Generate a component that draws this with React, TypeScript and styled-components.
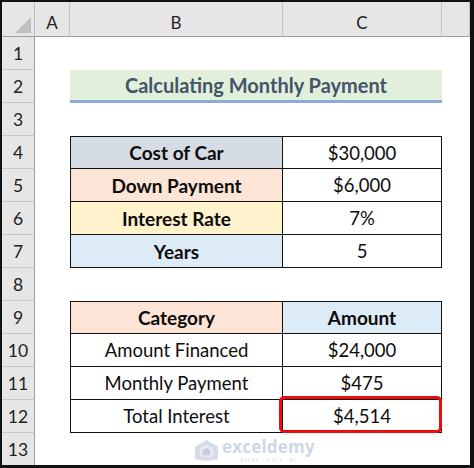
import React from "react";
import styled, { createGlobalStyle, css } from "styled-components";

const Global = createGlobalStyle`
  html, body { margin: 0; padding: 0; background: #000; }
  body { font-family: Lato, "Noto Sans", sans-serif; }
`;

const Frame = styled.div`
  width: 474px;
  height: 468px;
  box-sizing: border-box;
  padding: 2px 4px 3px 2px;
  background: #111;
`;

const Sheet = styled.div`
  position: relative;
  height: 100%;
  background: #fff;
  display: grid;
  grid-template-columns: 33px 35px 213px 159px 1fr;
  grid-template-rows: 35px repeat(13, 33px);
  overflow: hidden;
  color: #0d0d0d;
`;

const Corner = styled.div`
  position: relative;
  background: #e6e6e6;
  border-right: 1px solid #bdbdbd;
  border-bottom: 1px solid #9e9e9e;
  box-sizing: border-box;
  &::after {
    content: "";
    position: absolute;
    right: 3px;
    bottom: 3px;
    width: 0;
    height: 0;
    border-left: 16px solid transparent;
    border-bottom: 16px solid #bfbfbf;
  }
`;

const ColHead = styled.div`
  background: #e6e6e6;
  border-right: 1px solid #c4c4c4;
  border-bottom: 1px solid #9e9e9e;
  box-sizing: border-box;
  display: flex;
  align-items: center;
  justify-content: center;
  padding-top: 6px;
  font-size: 17px;
  color: #222;
`;

const RowHead = styled.div`
  background: #e6e6e6;
  border-bottom: 1px solid #c8c8c8;
  border-right: 1px solid #9e9e9e;
  box-sizing: border-box;
  display: flex;
  align-items: center;
  justify-content: center;
  font-size: 17.5px;
  color: #222;
`;

const Blank = styled.div``;

const Title = styled.div`
  grid-column: span 2;
  background: #e2efda;
  border-bottom: 3px solid #8eaadb;
  box-sizing: border-box;
  display: flex;
  align-items: center;
  justify-content: center;
  font-weight: 700;
  font-size: 20px;
  color: #44546a;
`;

const Cell = styled.div<{ $bg?: string; $bold?: boolean; $top?: boolean; $left?: boolean; $mark?: boolean }>`
  position: relative;
  box-sizing: border-box;
  background: ${(p) => p.$bg || "#fff"};
  font-weight: ${(p) => (p.$bold ? 700 : 400)};
  font-size: ${(p) => (p.$bold ? "19px" : "18.5px")};
  display: flex;
  align-items: center;
  justify-content: center;
  border-right: 1.5px solid #111;
  border-bottom: 1.5px solid #111;
  ${(p) => p.$top && css`border-top: 1.5px solid #111;`}
  ${(p) => p.$left && css`border-left: 1.5px solid #111;`}
  ${(p) =>
    p.$mark &&
    css`
      &::after {
        content: "";
        position: absolute;
        top: -4px;
        left: -4px;
        right: -1px;
        bottom: -1px;
        border: 3.5px solid #f00a0a;
        border-radius: 5px;
      }
    `}
`;

const Watermark = styled.div`
  position: absolute;
  left: 192px;
  top: 436px;
  display: flex;
  align-items: center;
  gap: 3px;
  opacity: 0.55;
`;

const Brand = styled.div`
  display: flex;
  flex-direction: column;
  align-items: center;
`;

const BrandName = styled.span`
  font-family: "Open Sans", sans-serif;
  font-weight: 700;
  font-size: 17px;
  line-height: 17px;
  color: #a9b7cf;
  letter-spacing: 0.2px;
`;

const BrandSub = styled.span`
  font-family: "Open Sans", sans-serif;
  font-size: 5px;
  line-height: 6px;
  color: #b7c2d6;
  letter-spacing: 1px;
  margin-top: 2px;
`;

type Row =
  | { kind: "blank" }
  | { kind: "title" }
  | { kind: "data"; b: string; c: string; bg?: string; cBg?: string; bBold?: boolean; cBold?: boolean; top?: boolean; mark?: boolean };

const rows: Row[] = [
  { kind: "blank" },
  { kind: "title" },
  { kind: "blank" },
  { kind: "data", b: "Cost of Car", c: "$30,000", bg: "#d6dce4", bBold: true, top: true },
  { kind: "data", b: "Down Payment", c: "$6,000", bg: "#fce4d6", bBold: true },
  { kind: "data", b: "Interest Rate", c: "7%", bg: "#fff2cc", bBold: true },
  { kind: "data", b: "Years", c: "5", bg: "#ddebf7", bBold: true },
  { kind: "blank" },
  { kind: "data", b: "Category", c: "Amount", bg: "#fce4d6", cBg: "#ddebf7", bBold: true, cBold: true, top: true },
  { kind: "data", b: "Amount Financed", c: "$24,000" },
  { kind: "data", b: "Monthly Payment", c: "$475" },
  { kind: "data", b: "Total Interest", c: "$4,514", mark: true },
  { kind: "blank" },
];

export default function App() {
  return (
    <>
      <Global />
      <Frame>
        <Sheet>
          <Corner />
          <ColHead>A</ColHead>
          <ColHead>B</ColHead>
          <ColHead>C</ColHead>
          <ColHead />
          {rows.map((r, i) => (
            <React.Fragment key={i}>
              <RowHead>{i + 1}</RowHead>
              <Blank />
              {r.kind === "blank" && (
                <>
                  <Blank />
                  <Blank />
                </>
              )}
              {r.kind === "title" && <Title>Calculating Monthly Payment</Title>}
              {r.kind === "data" && (
                <>
                  <Cell $bg={r.bg} $bold={r.bBold} $top={r.top} $left>
                    {r.b}
                  </Cell>
                  <Cell $bg={r.cBg} $bold={r.cBold} $top={r.top} $mark={r.mark}>
                    {r.c}
                  </Cell>
                </>
              )}
              <Blank />
            </React.Fragment>
          ))}
          <Watermark>
            <svg width="25" height="23" viewBox="0 0 26 24">
              <path d="M13 1 L25 8 L25 21 L13 23 L1 21 L1 8 Z" fill="#b3c0d6" />
              <path d="M13 6 L20 10 L20 18 L13 19 L6 18 L6 10 Z" fill="#d3dbe8" />
              <path d="M9 12 L13 9 L17 12 L17 17 L9 17 Z" fill="#9aa9c4" />
            </svg>
            <Brand>
              <BrandName>exceldemy</BrandName>
              <BrandSub>EXCEL · DATA · BI</BrandSub>
            </Brand>
          </Watermark>
        </Sheet>
      </Frame>
    </>
  );
}
